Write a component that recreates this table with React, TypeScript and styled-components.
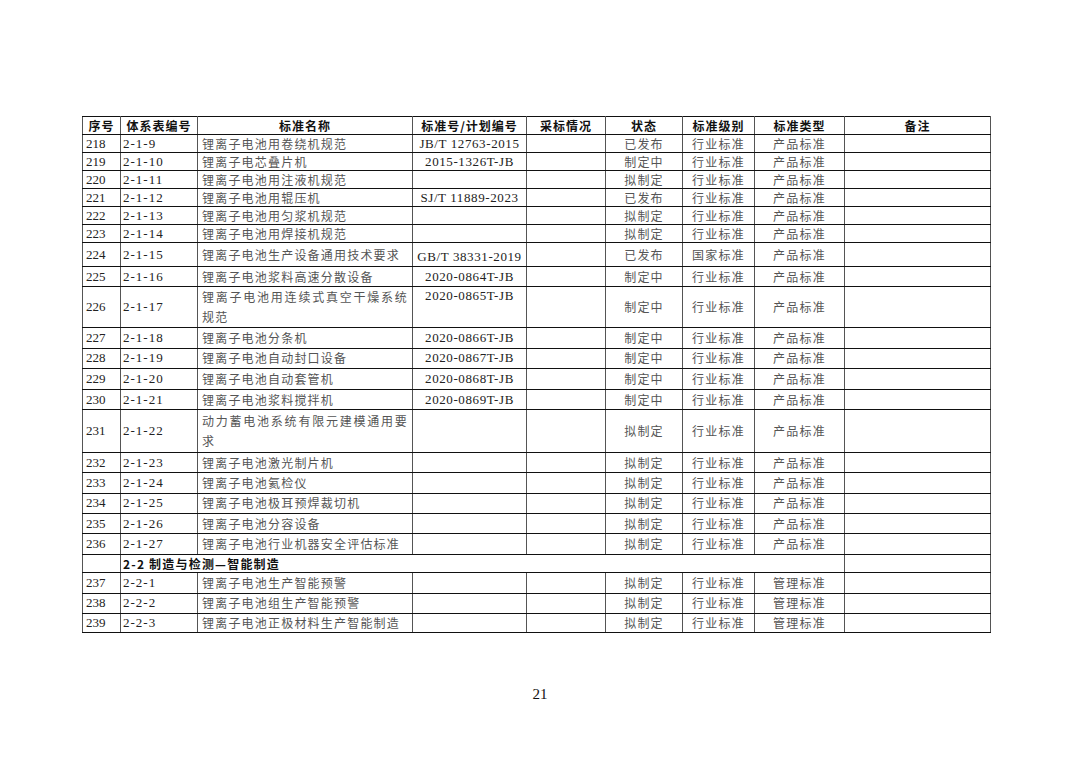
import styled, { createGlobalStyle } from 'styled-components'

const GlobalStyle = createGlobalStyle`
  html, body {
    margin: 0;
    padding: 0;
    background: #ffffff;
  }
`

type Row = {
    no: string
    code: string
    name: string
    std?: string
    status: string
    level: string
    kind: string
    h: number
    stdTop?: boolean
    stdLow?: boolean
    wrap?: boolean
}

const rows: Row[] = [
    { no: '218', code: '2-1-9', name: '锂离子电池用卷绕机规范', std: 'JB/T 12763-2015', status: '已发布', level: '行业标准', kind: '产品标准', h: 18 },
    { no: '219', code: '2-1-10', name: '锂离子电芯叠片机', std: '2015-1326T-JB', status: '制定中', level: '行业标准', kind: '产品标准', h: 18 },
    { no: '220', code: '2-1-11', name: '锂离子电池用注液机规范', status: '拟制定', level: '行业标准', kind: '产品标准', h: 18 },
    { no: '221', code: '2-1-12', name: '锂离子电池用辊压机', std: 'SJ/T 11889-2023', status: '已发布', level: '行业标准', kind: '产品标准', h: 18 },
    { no: '222', code: '2-1-13', name: '锂离子电池用匀浆机规范', status: '拟制定', level: '行业标准', kind: '产品标准', h: 18 },
    { no: '223', code: '2-1-14', name: '锂离子电池用焊接机规范', status: '拟制定', level: '行业标准', kind: '产品标准', h: 18 },
    { no: '224', code: '2-1-15', name: '锂离子电池生产设备通用技术要求', std: 'GB/T 38331-2019', status: '已发布', level: '国家标准', kind: '产品标准', h: 24, stdLow: true },
    { no: '225', code: '2-1-16', name: '锂离子电池浆料高速分散设备', std: '2020-0864T-JB', status: '制定中', level: '行业标准', kind: '产品标准', h: 20 },
    { no: '226', code: '2-1-17', name: '锂离子电池用连续式真空干燥系统规范', std: '2020-0865T-JB', status: '制定中', level: '行业标准', kind: '产品标准', h: 41, stdTop: true, wrap: true },
    { no: '227', code: '2-1-18', name: '锂离子电池分条机', std: '2020-0866T-JB', status: '制定中', level: '行业标准', kind: '产品标准', h: 20.6 },
    { no: '228', code: '2-1-19', name: '锂离子电池自动封口设备', std: '2020-0867T-JB', status: '制定中', level: '行业标准', kind: '产品标准', h: 20.6 },
    { no: '229', code: '2-1-20', name: '锂离子电池自动套管机', std: '2020-0868T-JB', status: '制定中', level: '行业标准', kind: '产品标准', h: 20.6 },
    { no: '230', code: '2-1-21', name: '锂离子电池浆料搅拌机', std: '2020-0869T-JB', status: '制定中', level: '行业标准', kind: '产品标准', h: 20.6 },
    { no: '231', code: '2-1-22', name: '动力蓄电池系统有限元建模通用要求', status: '拟制定', level: '行业标准', kind: '产品标准', h: 42.5, wrap: true },
    { no: '232', code: '2-1-23', name: '锂离子电池激光制片机', status: '拟制定', level: '行业标准', kind: '产品标准', h: 20.4 },
    { no: '233', code: '2-1-24', name: '锂离子电池氦检仪', status: '拟制定', level: '行业标准', kind: '产品标准', h: 20.4 },
    { no: '234', code: '2-1-25', name: '锂离子电池极耳预焊裁切机', status: '拟制定', level: '行业标准', kind: '产品标准', h: 20.4 },
    { no: '235', code: '2-1-26', name: '锂离子电池分容设备', status: '拟制定', level: '行业标准', kind: '产品标准', h: 20.4 },
    { no: '236', code: '2-1-27', name: '锂离子电池行业机器安全评估标准', status: '拟制定', level: '行业标准', kind: '产品标准', h: 20.4 },
]

const rows2: Row[] = [
    { no: '237', code: '2-2-1', name: '锂离子电池生产智能预警', status: '拟制定', level: '行业标准', kind: '管理标准', h: 20.4 },
    { no: '238', code: '2-2-2', name: '锂离子电池组生产智能预警', status: '拟制定', level: '行业标准', kind: '管理标准', h: 20.4 },
    { no: '239', code: '2-2-3', name: '锂离子电池正极材料生产智能制造', status: '拟制定', level: '行业标准', kind: '管理标准', h: 19 },
]

const widths = [38, 77, 215, 114, 79, 77, 72, 90, 146]

const DataRow = ({ r }: { r: Row }) => (
    <Tr style={{ height: r.h }}>
        <Num>{r.no}</Num>
        <Code>{r.code}</Code>
        <Name $wrap={r.wrap}>{r.name}</Name>
        <Std $top={r.stdTop} $low={r.stdLow}>{r.std ?? ''}</Std>
        <Cell />
        <Center>{r.status}</Center>
        <Center>{r.level}</Center>
        <Center>{r.kind}</Center>
        <Cell />
    </Tr>
)

const App = () => {
    return (
        <Page>
            <GlobalStyle />
            <Table>
                <colgroup>
                    {widths.map((w, i) => (
                        <col key={i} style={{ width: w }} />
                    ))}
                </colgroup>
                <thead>
                    <Tr style={{ height: 18 }}>
                        <Head>序号</Head>
                        <Head>体系表编号</Head>
                        <Head>标准名称</Head>
                        <Head>标准号/计划编号</Head>
                        <Head>采标情况</Head>
                        <Head>状态</Head>
                        <Head>标准级别</Head>
                        <Head>标准类型</Head>
                        <Head>备注</Head>
                    </Tr>
                </thead>
                <tbody>
                    {rows.map((r) => (
                        <DataRow key={r.no} r={r} />
                    ))}
                    <Tr style={{ height: 18.5 }}>
                        <Cell />
                        <Section colSpan={7}>2-2 制造与检测—智能制造</Section>
                        <Cell />
                    </Tr>
                    {rows2.map((r) => (
                        <DataRow key={r.no} r={r} />
                    ))}
                </tbody>
            </Table>
            <PageNo>21</PageNo>
        </Page>
    )
}

export default App

const Page = styled.div`
width: 1080px;
height: 763px;
box-sizing: border-box;
padding: 116px 0 0 82px;
background: #ffffff;
position: relative;
`

const Table = styled.table`
border-collapse: collapse;
table-layout: fixed;
width: 909px;
`

const Tr = styled.tr``

const Cell = styled.td`
border-top: 1px solid #111;
border-bottom: 1px solid #111;
border-left: 1px solid #555;
border-right: 1px solid #555;
padding: 0 3px;
vertical-align: middle;
line-height: 16px;
white-space: nowrap;
overflow: hidden;
`

const Head = styled(Cell)`
font-family: "Noto Sans CJK SC", sans-serif;
font-weight: 700;
font-size: 12px;
letter-spacing: 1px;
color: #111;
text-align: center;
padding: 0;
`

const Num = styled(Cell)`
font-family: "Liberation Serif", serif;
font-size: 13px;
color: #222;
`

const Code = styled(Num)`
letter-spacing: 1px;
padding: 0 2px;
`

const Name = styled(Cell)<{ $wrap?: boolean }>`
font-family: "Noto Sans CJK SC", sans-serif;
font-size: 12px;
letter-spacing: 1.2px;
color: #555;
padding: 0 4px;
white-space: ${(p) => (p.$wrap ? 'normal' : 'nowrap')};
line-height: ${(p) => (p.$wrap ? '20px' : '16px')};
text-align: ${(p) => (p.$wrap ? 'justify' : 'left')};
`

const Std = styled(Cell)<{ $top?: boolean; $low?: boolean }>`
font-family: "Liberation Serif", "Noto Sans CJK SC", serif;
font-size: 13px;
letter-spacing: 0.6px;
color: #222;
text-align: center;
padding: ${(p) => (p.$top ? '1px 0 0' : p.$low ? '5px 0 0' : '0')};
vertical-align: ${(p) => (p.$top ? 'top' : 'middle')};
`

const Center = styled(Cell)`
font-family: "Noto Sans CJK SC", sans-serif;
font-size: 12px;
letter-spacing: 1.2px;
color: #555;
text-align: center;
`

const Section = styled(Cell)`
font-family: "Noto Sans CJK SC", sans-serif;
font-weight: 700;
font-size: 12px;
letter-spacing: 1.2px;
color: #111;
padding: 0 2px;
`

const PageNo = styled.div`
position: absolute;
left: 0;
right: 0;
top: 686px;
text-align: center;
font-family: "Liberation Serif", serif;
font-size: 15px;
color: #111;
`
